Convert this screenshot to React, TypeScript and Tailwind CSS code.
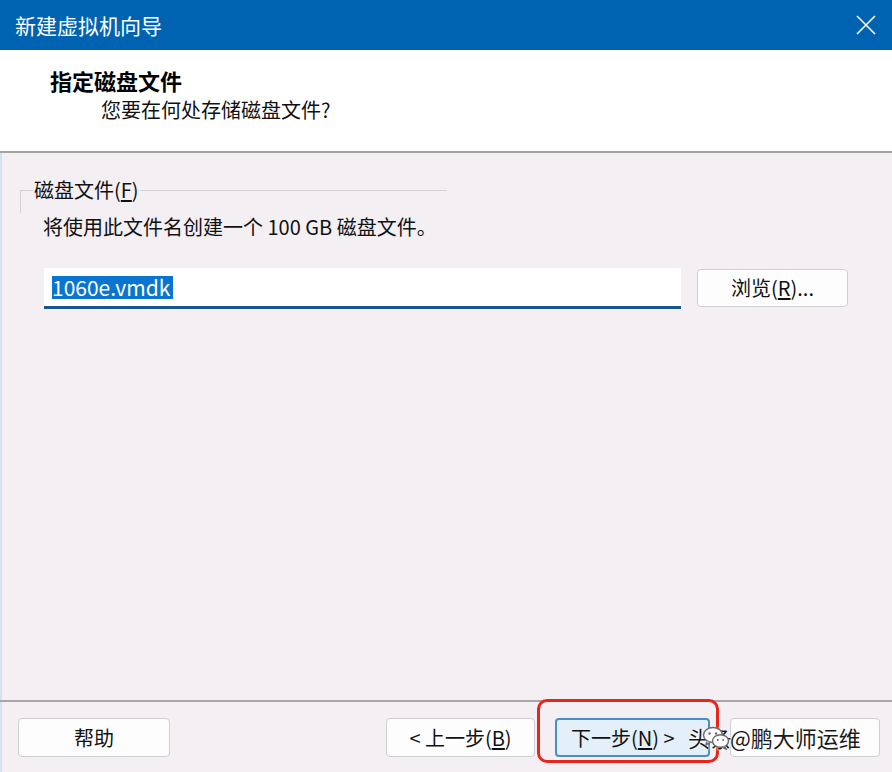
const FONT = "font-['Microsoft_YaHei','Noto_Sans_CJK_SC',sans-serif]";

function WeChatIcon() {
  return (
    <svg width="28" height="26" viewBox="0 0 28 26" fill="none">
      <ellipse cx="11" cy="10" rx="9.5" ry="7.5" fill="#fff" stroke="#6b6b6b" strokeWidth="1.4" />
      <path d="M5 16.5 L4 20 L8.5 17.2" fill="#fff" stroke="#6b6b6b" strokeWidth="1.4" strokeLinejoin="round" />
      <circle cx="7.5" cy="8.5" r="1.2" fill="#6b6b6b" />
      <circle cx="14" cy="8.5" r="1.2" fill="#6b6b6b" />
      <ellipse cx="18.5" cy="16" rx="8" ry="6.3" fill="#fff" stroke="#6b6b6b" strokeWidth="1.4" />
      <path d="M22.5 21.5 L24.5 24.5 L20 22.2" fill="#fff" stroke="#6b6b6b" strokeWidth="1.4" strokeLinejoin="round" />
      <circle cx="15.8" cy="15" r="1" fill="#6b6b6b" />
      <circle cx="21.2" cy="15" r="1" fill="#6b6b6b" />
    </svg>
  );
}

export default function App() {
  return (
    <div className={`relative w-[892px] h-[772px] flex flex-col bg-[#f3eff3] overflow-hidden ${FONT}`}>
      {/* title bar */}
      <div className="h-[50px] bg-[#0063b1] flex items-center justify-between pl-[15px] pr-[16px] shrink-0">
        <span className="text-white text-[21px] leading-none">新建虚拟机向导</span>
        <svg width="20" height="20" viewBox="0 0 20 20">
          <path d="M1 1 L19 19 M19 1 L1 19" stroke="#fff" strokeWidth="1.6" />
        </svg>
      </div>

      {/* header */}
      <div className="h-[101px] bg-white shrink-0 pt-[15px]">
        <div className="pl-[50px] text-[22px] font-bold leading-[30px] text-black">指定磁盘文件</div>
        <div className="pl-[101px] mt-[1px] text-[20px] leading-[28px] text-[#111]">您要在何处存储磁盘文件?</div>
      </div>
      <div className="h-[2px] bg-[#a3a3a3] shrink-0" />

      {/* body */}
      <div className="flex-1 border-l-2 border-[#d3e2f1]">
        <fieldset className="ml-[18px] mt-[23px] w-[427px] border-t border-l border-[#d4d0d4] border-r-0 border-b-0">
          <legend className="ml-[12px] px-[1px] text-[20px] leading-[28px] text-[#111]">
            磁盘文件(<span className="underline underline-offset-2">F</span>)
          </legend>
          <div className="h-[9px]" />
        </fieldset>
        <div className="ml-[41px] text-[20px] leading-[28px] text-[#111]">将使用此文件名创建一个 100 GB 磁盘文件。</div>
        <div className="flex items-start gap-[16px] ml-[42px] mt-[27px]">
          <div className="w-[637px] h-[41px] bg-white border-b-[3px] border-[#1a5591] flex items-center pl-[8px]">
            <span className="bg-[#0a74d1] text-white text-[21px] leading-[23px] pr-[3px]">1060e.vmdk</span>
          </div>
          <button className="mt-[1px] w-[151px] h-[38px] bg-[#fdfdfd] border border-[#cfcfcf] rounded-[4px] text-[20px] text-[#111] leading-none">
            浏览(<span className="underline underline-offset-2">R</span>)...
          </button>
        </div>
      </div>

      {/* footer */}
      <div className="h-[2px] bg-[#a7a7a7] shrink-0" />
      <div className="h-[70px] shrink-0 flex items-start pt-[16px] pl-[16px] border-l-2 border-[#d3e2f1]">
        <button className="w-[152px] h-[39px] bg-[#fdfdfd] border border-[#cfcfcf] rounded-[4px] text-[20px] text-[#111] leading-none">
          帮助
        </button>
        <button className="ml-[216px] w-[149px] h-[39px] bg-[#fdfdfd] border border-[#cfcfcf] rounded-[4px] text-[20px] text-[#111] leading-none">
          &lt; 上一步(<span className="underline underline-offset-2">B</span>)
        </button>
        <button className="ml-[20px] w-[155px] h-[39px] bg-[#e3eff9] border-2 border-[#4a8ec7] rounded-[4px] text-[20px] text-[#111] leading-none text-left pl-[14px]">
          下一步(<span className="underline underline-offset-2">N</span>) &gt;
        </button>
        <div className="ml-[20px] w-[150px] h-[39px] bg-[#fdfdfd] border border-[#cfcfcf] rounded-[4px]" />
      </div>

      {/* red highlight */}
      <div className="absolute left-[537px] top-[699px] w-[182px] h-[64px] border-[3px] border-[#e8251b] rounded-[10px] pointer-events-none" />

      {/* watermark */}
      <div className="absolute left-[688px] top-[722px] flex items-center text-[22px] leading-[30px] text-[#1a1a1a] [text-shadow:0_0_2px_#fff,0_0_2px_#fff,0_0_3px_#fff] pointer-events-none">
        <span>头条</span>
        <span className="-ml-[30px] mt-[2px]"><WeChatIcon /></span>
        <span>@鹏大师运维</span>
      </div>
    </div>
  );
}
